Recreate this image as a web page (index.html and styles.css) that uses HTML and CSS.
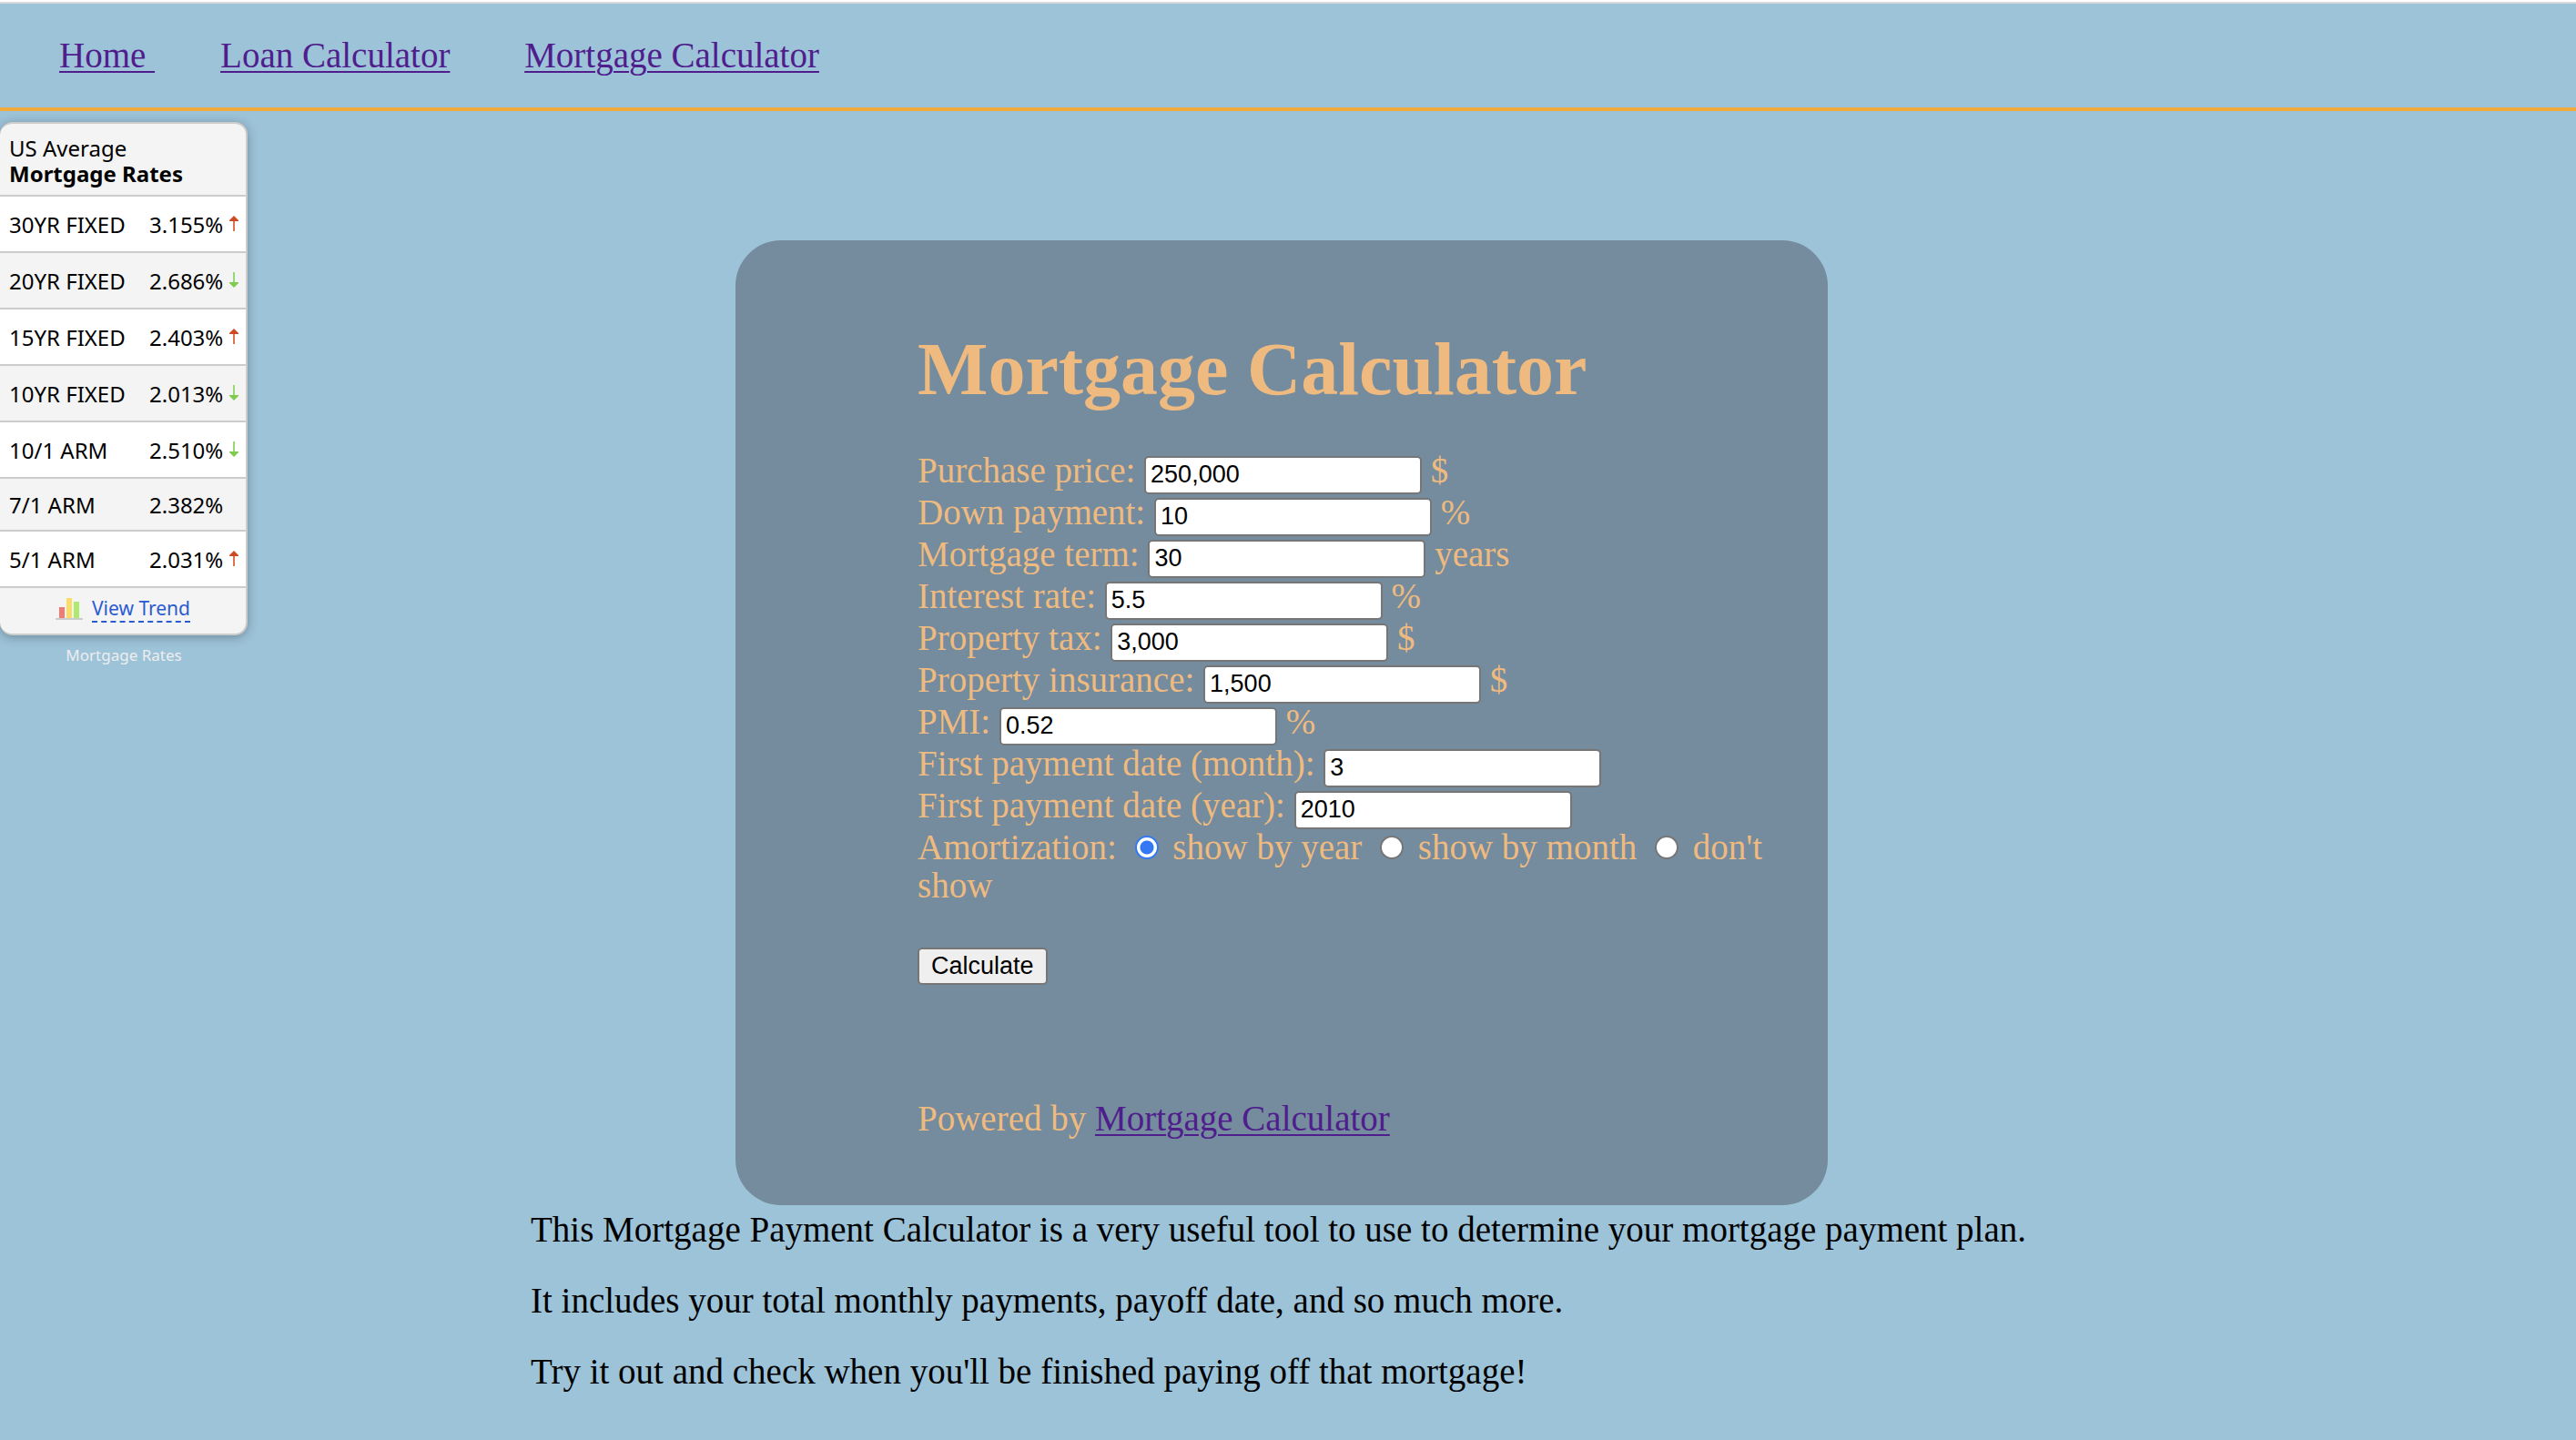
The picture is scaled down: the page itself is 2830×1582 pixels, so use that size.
FILE: index.html
```html
<!DOCTYPE html>
<html lang="en">
<head>
<meta charset="utf-8">
<title>Mortgage Calculator</title>
<link rel="stylesheet" href="styles.css">
</head>
<body>
<svg class="sprite" width="0" height="0" aria-hidden="true">
  <symbol id="up" viewBox="0 0 10 17"><path d="M4 3h2v14H4z" fill="#df7350"/><path d="M5 0L10 5V6H0V5z" fill="#ce4a22"/></symbol>
  <symbol id="down" viewBox="0 0 10 17"><path d="M4 0h2v14H4z" fill="#98d873"/><path d="M5 17L0 12V11H10V12z" fill="#80cb4f"/></symbol>
</svg>
<header class="site-header">
  <nav class="nav">
    <a href="#home">Home </a>
    <a href="#loan">Loan Calculator</a>
    <a href="#mortgage">Mortgage Calculator</a>
  </nav>
</header>
<div class="page">
  <aside class="rates">
    <div class="rates-box">
      <div class="rates-title">US Average<br><strong>Mortgage Rates</strong></div>
      <table class="rates-table">
        <tr><th scope="row">30YR FIXED</th><td>3.155%</td><td class="trend"><svg><use href="#up"/></svg></td></tr>
        <tr><th scope="row">20YR FIXED</th><td>2.686%</td><td class="trend"><svg><use href="#down"/></svg></td></tr>
        <tr><th scope="row">15YR FIXED</th><td>2.403%</td><td class="trend"><svg><use href="#up"/></svg></td></tr>
        <tr><th scope="row">10YR FIXED</th><td>2.013%</td><td class="trend"><svg><use href="#down"/></svg></td></tr>
        <tr><th scope="row">10/1 ARM</th><td>2.510%</td><td class="trend"><svg><use href="#down"/></svg></td></tr>
        <tr class="steady"><th scope="row">7/1 ARM</th><td>2.382%</td><td class="trend"></td></tr>
        <tr><th scope="row">5/1 ARM</th><td>2.031%</td><td class="trend"><svg><use href="#up"/></svg></td></tr>
      </table>
      <div class="rates-more">
        <svg class="chart" viewBox="0 0 30 24" aria-hidden="true"><path d="M0 22h30v2H0z" fill="#ccc"/><path d="M4 10h6v12H4z" fill="#f07c76"/><path d="M12 0h6v22h-6z" fill="#fbdc68"/><path d="M20 4h6v18h-6z" fill="#aeea6e"/></svg>
        <a href="#trend">View Trend</a>
      </div>
    </div>
    <a class="rates-source" href="#rates">Mortgage Rates</a>
  </aside>
  <main class="content">
    <form class="card">
      <h1>Mortgage Calculator</h1>
      <div class="row"><label for="price">Purchase price:</label> <input class="field" type="text" id="price" value="250,000"> $</div>
      <div class="row"><label for="down-pay">Down payment:</label> <input class="field" type="text" id="down-pay" value="10"> %</div>
      <div class="row"><label for="term">Mortgage term:</label> <input class="field" type="text" id="term" value="30"> years</div>
      <div class="row"><label for="rate">Interest rate:</label> <input class="field" type="text" id="rate" value="5.5"> %</div>
      <div class="row"><label for="tax">Property tax:</label> <input class="field" type="text" id="tax" value="3,000"> $</div>
      <div class="row"><label for="insurance">Property insurance:</label> <input class="field" type="text" id="insurance" value="1,500"> $</div>
      <div class="row"><label for="pmi">PMI:</label> <input class="field" type="text" id="pmi" value="0.52"> %</div>
      <div class="row"><label for="month">First payment date (month):</label> <input class="field" type="text" id="month" value="3"></div>
      <div class="row"><label for="year">First payment date (year):</label> <input class="field" type="text" id="year" value="2010"></div>
      <div>Amortization:
        <input class="radio" type="radio" name="show" id="by-year" checked> <label for="by-year">show by year</label>
        <input class="radio" type="radio" name="show" id="by-month"> <label for="by-month">show by month</label>
        <input class="radio" type="radio" name="show" id="hide"> <label for="hide">don't show</label></div>
      <button class="submit" type="button">Calculate</button>
      <div class="powered">Powered by <a href="#powered">Mortgage Calculator</a></div>
    </form>
    <div class="about">
      <p>This Mortgage Payment Calculator is a very useful tool to use to determine your mortgage payment plan.</p>
      <p>It includes your total monthly payments, payoff date, and so much more.</p>
      <p>Try it out and check when you'll be finished paying off that mortgage!</p>
    </div>
  </main>
</div>
</body>
</html>
```
FILE: styles.css
```css
* { box-sizing: border-box; }

body {
  margin: 0;
  border-top: 2px solid #fff;
  background: #9dc3d9;
  color: #000;
  font: 39px/42px "Liberation Serif", serif;
}

a { color: #4f1d8c; text-decoration-thickness: 2px; text-underline-offset: 4px; }

.sprite { position: absolute; }

.site-header {
  padding: 36px 65px;
  border-top: 2px solid #d8d8dd;
  border-bottom: 4px solid #f4a93b;
}

.nav a { margin-right: 72px; }

.page { display: flex; align-items: flex-start; }

/* Rates widget */
.rates {
  flex: none;
  width: 272px;
  margin-top: 12px;
  font: 24px/28px "Noto Sans", sans-serif;
}

.rates-box {
  overflow: hidden;
  border: 2px solid #ccc;
  border-left: 0;
  border-radius: 14px;
  background: #f4f4f4;
  box-shadow: 0 2px 12px rgba(0, 0, 0, 0.3);
}

.rates-title { padding: 13px 10px 9px; border-bottom: 2px solid #ccc; }

.rates-table { width: 100%; border-spacing: 0; }
.rates-table tr { height: 62px; }
.rates-table tr.steady { height: 58px; }
.rates-table tr:nth-child(odd) { background: #fff; }
.rates-table th, .rates-table td {
  padding: 2px 0 0;
  border-bottom: 2px solid #ccc;
  font-weight: 400;
  text-align: left;
}
.rates-table th { padding-left: 10px; }
.rates-table td { width: 88px; }
.rates-table .trend { width: 18px; padding: 0 0 2px; }
.trend svg { display: block; width: 10px; height: 17px; }

.rates-more {
  display: flex;
  justify-content: center;
  align-items: center;
  gap: 10px;
  height: 50px;
  padding-bottom: 4px;
  font-size: 21px;
}
.rates-more a {
  border-bottom: 2px dashed #2a5bd0;
  color: #2a5bd0;
  text-decoration: none;
}
.chart { width: 30px; height: 24px; }

.rates-source {
  display: block;
  margin-top: 8px;
  color: #eee;
  font-size: 17px;
  text-align: center;
  text-decoration: none;
}

/* Calculator */
.content { flex: 1; padding: 142px 40px 36px 311px; }

.card {
  max-width: 1200px;
  margin-left: 225px;
  padding: 96px 40px 74px 200px;
  border-radius: 50px;
  background: #748c9d;
  color: #efba80;
}

h1 { margin: 0 0 44px; font-size: 82px; line-height: 92px; }

.row { height: 46px; }

.field {
  width: 305px;
  height: 42px;
  margin: 0;
  padding: 2px 5px;
  border: 2px solid #767676;
  border-radius: 5px;
  background: #fff;
  color: #000;
  font: 27px "Liberation Sans", sans-serif;
}

.radio {
  appearance: none;
  width: 26px;
  height: 26px;
  margin: 0 6px 0 10px;
  border: 2px solid #767676;
  border-radius: 50%;
  background: #fff;
}
.radio:checked {
  border-color: #3478f6;
  background: radial-gradient(circle, #3478f6 7px, #fff 8px);
}

.submit {
  display: block;
  height: 41px;
  margin-top: 47px;
  padding: 0 13px;
  border: 2px solid #767676;
  border-radius: 5px;
  background: #efefef;
  color: #000;
  font: 27px "Liberation Sans", sans-serif;
}

.powered { margin-top: 126px; }

.about { display: grid; gap: 36px; margin-top: 6px; }
.about p { margin: 0; }
```
